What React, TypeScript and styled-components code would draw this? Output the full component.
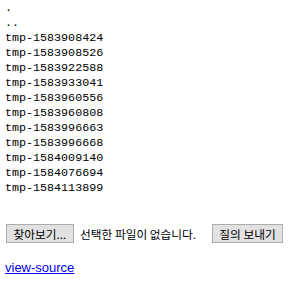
import React from 'react'
import styled, { createGlobalStyle } from 'styled-components'

const GlobalStyle = createGlobalStyle`
  body {
    margin: 0;
    background: #ffffff;
  }
`

const Page = styled.div`
  padding: 1px 5px 0 5px;
`

const Listing = styled.pre`
  margin: 0;
  font-family: 'Liberation Mono', 'DejaVu Sans Mono', monospace;
  font-size: 11.7px;
  line-height: 15px;
  color: #000;
`

const UploadForm = styled.form`
  display: flex;
  align-items: center;
  margin-top: 28px;
  height: 19px;
  font-family: 'Noto Sans CJK KR', 'Liberation Sans', sans-serif;
  font-size: 11.7px;
  color: #000;
`

const FormButton = styled.button<{ $gap?: number; $width: number }>`
  width: ${({ $width }) => $width}px;
  height: 19px;
  margin: 0 0 0 ${({ $gap }) => $gap ?? 0}px;
  padding: 0;
  border: 1px solid #adadad;
  background: #e1e1e1;
  font-family: inherit;
  font-size: 11.7px;
  color: #000;
  line-height: 17px;
  border-radius: 0;
  white-space: nowrap;
`

const FileStatus = styled.span`
  margin-left: 6px;
  white-space: nowrap;
`

const SourceLink = styled.a`
  display: inline-block;
  margin-top: 17px;
  font-family: 'Liberation Sans', Arial, sans-serif;
  font-size: 13px;
  color: #0000ee;
  text-decoration: underline;
`

const files = [
  '.',
  '..',
  'tmp-1583908424',
  'tmp-1583908526',
  'tmp-1583922588',
  'tmp-1583933041',
  'tmp-1583960556',
  'tmp-1583960808',
  'tmp-1583996663',
  'tmp-1583996668',
  'tmp-1584009140',
  'tmp-1584076694',
  'tmp-1584113899',
]

const App: React.FC = () => {
  return (
    <>
      <GlobalStyle />
      <Page>
        <Listing>{files.join('\n')}</Listing>
        <UploadForm onSubmit={(e) => e.preventDefault()}>
          <FormButton type="button" $gap={1} $width={68}>찾아보기...</FormButton>
          <FileStatus>선택한 파일이 없습니다.</FileStatus>
          <FormButton type="submit" $gap={16} $width={71}>질의 보내기</FormButton>
        </UploadForm>
        <SourceLink href="#">view-source</SourceLink>
      </Page>
    </>
  )
}

export default App
